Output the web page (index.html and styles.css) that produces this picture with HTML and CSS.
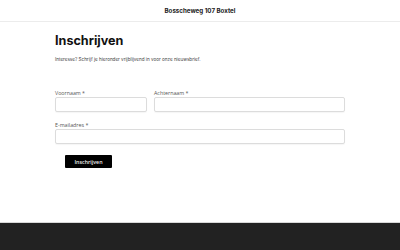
FILE: index.html
```html
<!DOCTYPE html>
<html lang="nl">
<head>
  <meta charset="UTF-8">
  <meta name="viewport" content="width=device-width, initial-scale=1.0">
  <title>Inschrijven - Bosscheweg 107 Boxtel</title>
  <link rel="stylesheet" href="styles.css">
</head>
<body>
  <header class="site-header">
    <span class="site-title">Bosscheweg 107 Boxtel</span>
  </header>

  <main class="container">
    <h1>Inschrijven</h1>
    <p class="intro">Interesse? Schrijf je hieronder vrijblijvend in voor onze nieuwsbrief.</p>

    <form class="signup">
      <div class="row">
        <label class="field">
          <span class="field-label">Voornaam *</span>
          <input type="text">
        </label>
        <label class="field">
          <span class="field-label">Achternaam *</span>
          <input type="text">
        </label>
      </div>
      <label class="field">
        <span class="field-label">E-mailadres *</span>
        <input type="email">
      </label>
      <button type="button" class="btn">Inschrijven</button>
    </form>
  </main>

  <footer class="site-footer"></footer>
</body>
</html>
```

FILE: styles.css
```css
* {
  margin: 0;
  padding: 0;
  box-sizing: border-box;
}

body {
  font-family: 'Inter', 'Liberation Sans', sans-serif;
  color: #111;
  background: #fff;
  min-height: 100vh;
  display: flex;
  flex-direction: column;
}

/* Header */
.site-header {
  height: 22px;
  border-bottom: 1px solid #ececec;
  display: flex;
  align-items: center;
  justify-content: center;
}

.site-title {
  font-size: 6.2px;
  font-weight: 700;
  color: #222;
}

/* Content */
.container {
  width: 290px;
  margin: 0 auto;
  padding-top: 11px;
}

h1 {
  font-size: 12.6px;
  line-height: 16px;
  font-weight: 700;
  color: #111;
}

.intro {
  font-size: 4.6px;
  line-height: 8px;
  margin-top: 7px;
  color: #444;
}

.signup {
  margin-top: 25px;
  display: flex;
  flex-direction: column;
  gap: 9px;
}

.row {
  display: grid;
  grid-template-columns: 92px 1fr;
  gap: 7px;
}

.field {
  display: flex;
  flex-direction: column;
}

.field-label {
  font-family: 'Open Sans', 'Liberation Sans', sans-serif;
  font-size: 5.3px;
  line-height: 8px;
  color: #555;
}

.field input {
  height: 15px;
  border: 1px solid #dcdcdc;
  border-radius: 2px;
  box-shadow: 0 1px 1px rgba(0,0,0,0.04);
  background: #fff;
}

.btn {
  align-self: flex-start;
  margin: 2px 0 0 10px;
  width: 47px;
  height: 13px;
  background: #000;
  color: #eee;
  border: none;
  border-radius: 1px;
  font-family: 'Open Sans', 'Liberation Sans', sans-serif;
  font-size: 5.3px;
  font-weight: 600;
}

/* Footer */
.site-footer {
  margin-top: auto;
  height: 28px;
  background: #222;
  border-top: 1px solid #d8d8d8;
}
```
